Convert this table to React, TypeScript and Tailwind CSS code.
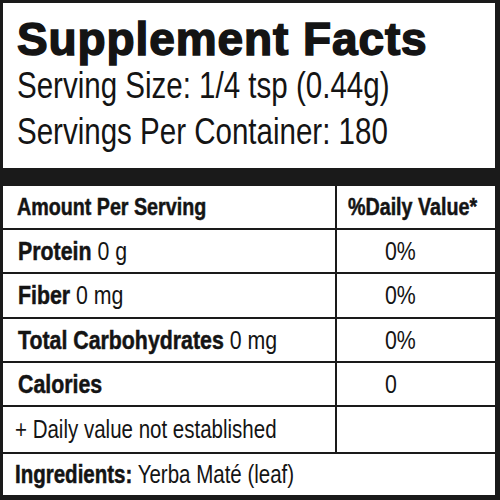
// Helvetica Condensed look: Liberation Sans squeezed horizontally
const cond = "inline-block origin-left scale-x-[0.82] whitespace-nowrap font-['Liberation_Sans',sans-serif]";
const heavy = 'font-bold [-webkit-text-stroke:0.5px_#141414]';

type Row = {
  label: string;
  amount?: string;
  dv: string;
  h: string;
};

const rows: Row[] = [
  { label: 'Protein', amount: '0 g', dv: '0%', h: 'h-[44px]' },
  { label: 'Fiber', amount: '0 mg', dv: '0%', h: 'h-[45px]' },
  { label: 'Total Carbohydrates', amount: '0 mg', dv: '0%', h: 'h-[44px]' },
  { label: 'Calories', dv: '0', h: 'h-[44px]' },
];

export default function App() {
  return (
    <div className="flex h-[500px] w-[500px] flex-col border-t-[3px] border-r-[5px] border-b-[5px] border-l-[3px] border-[#1a1a1a] bg-white text-[#141414]">
      {/* heading */}
      <div className="flex h-[165px] flex-col pl-[14px] pt-[10px]">
        <h1 className="font-['Liberation_Sans',sans-serif] text-[46px] font-bold leading-[52px] tracking-[0.9px] [-webkit-text-stroke:1.5px_#141414]">
          Supplement Facts
        </h1>
        <p className="-mt-[3px] text-[36px] leading-[45px]">
          <span className={cond}>Serving Size: 1/4 tsp (0.44g)</span>
        </p>
        <p className="text-[36px] leading-[45px]">
          <span className={cond}>Servings Per Container: 180</span>
        </p>
      </div>
      <div className="h-[18px] bg-[#1a1a1a]" />

      {/* table */}
      <div className="flex flex-col">
        <div className="flex h-[44px] border-b-2 border-[#1a1a1a]">
          <div className="flex w-[334px] shrink-0 items-center border-r-2 border-[#1a1a1a] pl-[14px] text-[24px]">
            <span className={`${cond} ${heavy}`}>Amount Per Serving</span>
          </div>
          <div className="flex min-w-0 flex-1 items-center pl-[11px] text-[24px]">
            <span className={`${cond} ${heavy}`}>%Daily Value*</span>
          </div>
        </div>
        {rows.map((r) => (
          <div key={r.label} className={`flex ${r.h} border-b-2 border-[#1a1a1a]`}>
            <div className="flex w-[334px] shrink-0 items-center border-r-2 border-[#1a1a1a] pl-[15px] text-[26px]">
              <span className={cond}>
                <b className={heavy}>{r.label}</b>
                {r.amount && ` ${r.amount}`}
              </span>
            </div>
            <div className="flex min-w-0 flex-1 items-center pl-[48px] text-[26px]">
              <span className={cond}>{r.dv}</span>
            </div>
          </div>
        ))}
        <div className="flex h-[47px] border-b-2 border-[#1a1a1a]">
          <div className="flex w-[334px] shrink-0 items-center border-r-2 border-[#1a1a1a] pl-[12px] text-[25px]">
            <span className={cond}>+ Daily value not established</span>
          </div>
          <div className="min-w-0 flex-1" />
        </div>
        <div className="flex h-[41px] items-center pl-[12px] text-[25px]">
          <span className={cond}>
            <b className={heavy}>Ingredients:</b> Yerba Maté (leaf)
          </span>
        </div>
      </div>
    </div>
  );
}
